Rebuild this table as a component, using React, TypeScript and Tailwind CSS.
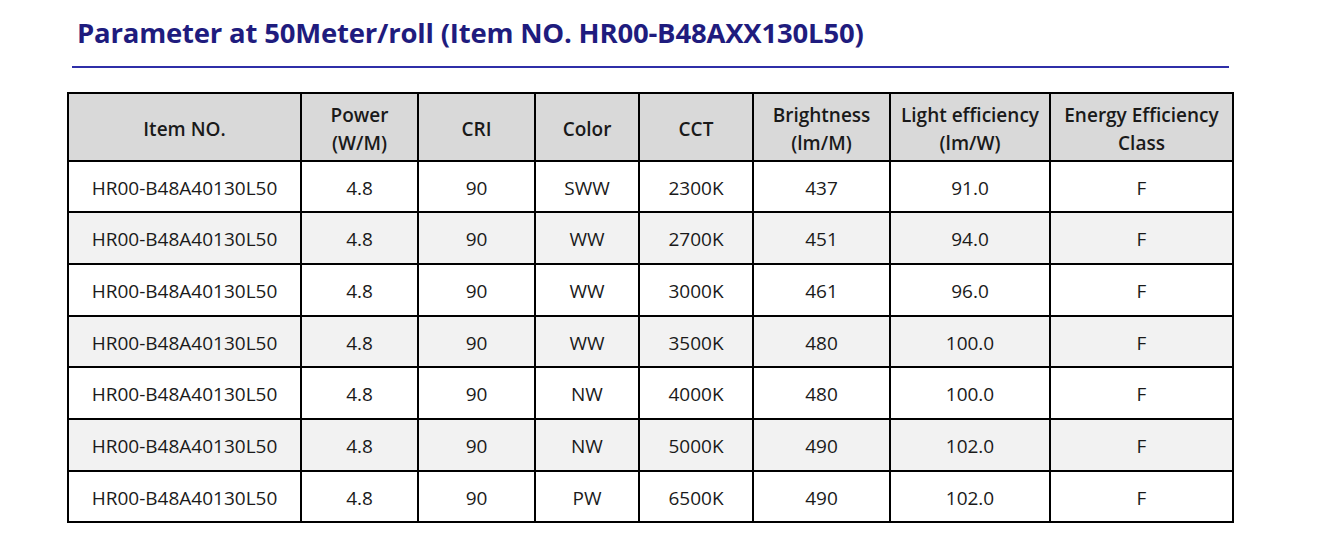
const headers = [
  ["Item NO."],
  ["Power", "(W/M)"],
  ["CRI"],
  ["Color"],
  ["CCT"],
  ["Brightness", "(lm/M)"],
  ["Light efficiency", "(lm/W)"],
  ["Energy Efficiency", "Class"],
];

const widths = ["w-[233px]", "w-[117px]", "w-[117px]", "w-[104px]", "w-[114px]", "w-[137px]", "w-[160px]", "w-[183px]"];

const rows = [
  ["SWW", "2300K", "437", "91.0"],
  ["WW", "2700K", "451", "94.0"],
  ["WW", "3000K", "461", "96.0"],
  ["WW", "3500K", "480", "100.0"],
  ["NW", "4000K", "480", "100.0"],
  ["NW", "5000K", "490", "102.0"],
  ["PW", "6500K", "490", "102.0"],
];

export default function App() {
  return (
    <div className="w-[1338px] h-[556px] bg-white font-['Open_Sans',sans-serif] text-[#1a1a1a]">
      <div className="pt-[13px] pl-[72px] w-[1229px]">
        <h1 className="pl-[5px] text-[27.5px] leading-[40px] font-bold text-[#1f1c7e] tracking-[-0.2px]">
          Parameter at 50Meter/roll (Item NO. HR00-B48AXX130L50)
        </h1>
        <div className="mt-[13px] h-[1.5px] bg-[#2f2fa8]" />
      </div>

      <table className="ml-[67px] mt-[24px] border-collapse table-fixed border-2 border-black text-[19px]">
        <thead>
          <tr className="h-[68px] bg-[#d9d9d9]">
            {headers.map((h, i) => (
              <th key={i} className={`${widths[i]} border-2 border-black font-semibold leading-[28px] text-center px-0 pt-[4px] pb-0`}>
                {h.map((line) => (
                  <div key={line}>{line}</div>
                ))}
              </th>
            ))}
          </tr>
        </thead>
        <tbody>
          {rows.map((r, i) => (
            <tr key={i} className={`h-[51.7px] ${i % 2 === 1 ? "bg-[#f2f2f2]" : "bg-white"}`}>
              {["HR00-B48A40130L50", "4.8", "90", r[0], r[1], r[2], r[3], "F"].map((c, j) => (
                <td key={j} className="border-2 border-black text-center px-0 pt-[3px] pb-0">
                  {c}
                </td>
              ))}
            </tr>
          ))}
        </tbody>
      </table>
    </div>
  );
}
